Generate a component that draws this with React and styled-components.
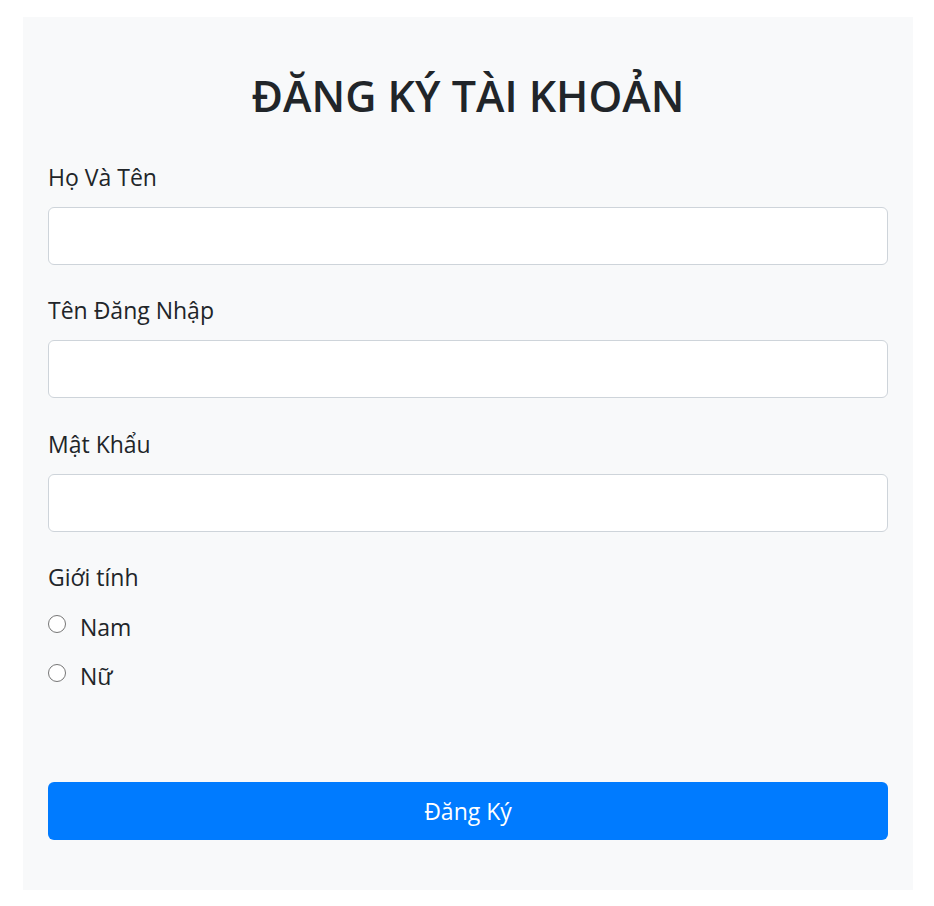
import React from "react";
import styled, { createGlobalStyle } from "styled-components";

const Global = createGlobalStyle`
  html, body { margin: 0; padding: 0; background: #ffffff; }
  body { font-family: "Open Sans", "Noto Sans", "DejaVu Sans", sans-serif; color: #212529; }
  * { box-sizing: border-box; }
`;

const Panel = styled.form`
  width: 890px;
  margin: 17px 0 0 23px;
  padding: 50px 25px 50px;
  background: #f8f9fa;
  display: flex;
  flex-direction: column;
`;

const Title = styled.h2`
  margin: 0 0 34px;
  font-size: 43px;
  line-height: 58px;
  font-weight: 600;
  text-align: center;
  color: #212529;
`;

const Field = styled.div`
  display: flex;
  flex-direction: column;
  margin-bottom: ${(p) => p.$gap ?? 27}px;
`;

const Label = styled.label`
  font-size: 23px;
  line-height: 36px;
  margin-bottom: 12px;
  color: #212529;
`;

const Input = styled.input`
  height: 58px;
  width: 100%;
  border: 1px solid #ced4da;
  border-radius: 6px;
  background: #ffffff;
  padding: 0 18px;
  font-size: 23px;
  font-family: inherit;
  outline: none;
`;

const RadioGroup = styled.div`
  display: flex;
  flex-direction: column;
  gap: 13px;
  margin-top: 2px;
`;

const RadioRow = styled.label`
  display: flex;
  align-items: center;
  height: 36px;
  font-size: 23px;
  color: #212529;
`;

const Radio = styled.input.attrs({ type: "radio" })`
  appearance: none;
  width: 18px;
  height: 18px;
  margin: -6px 14px 0 0;
  border: 1.5px solid #767676;
  border-radius: 50%;
  background: #ffffff;
`;

const Submit = styled.button`
  margin-top: 88px;
  height: 58px;
  width: 100%;
  border: none;
  border-radius: 6px;
  background: #007bff;
  color: #ffffff;
  font-size: 23px;
  font-family: inherit;
`;

export default function App() {
  return (
    <>
      <Global />
      <Panel onSubmit={(e) => e.preventDefault()}>
        <Title>ĐĂNG KÝ TÀI KHOẢN</Title>
        <Field>
          <Label>Họ Và Tên</Label>
          <Input type="text" />
        </Field>
        <Field $gap={28}>
          <Label>Tên Đăng Nhập</Label>
          <Input type="text" />
        </Field>
        <Field>
          <Label>Mật Khẩu</Label>
          <Input type="password" />
        </Field>
        <Field $gap={0}>
          <Label as="span">Giới tính</Label>
          <RadioGroup>
            <RadioRow>
              <Radio name="gender" />
              Nam
            </RadioRow>
            <RadioRow>
              <Radio name="gender" />
              Nữ
            </RadioRow>
          </RadioGroup>
        </Field>
        <Submit type="submit">Đăng Ký</Submit>
      </Panel>
    </>
  );
}
